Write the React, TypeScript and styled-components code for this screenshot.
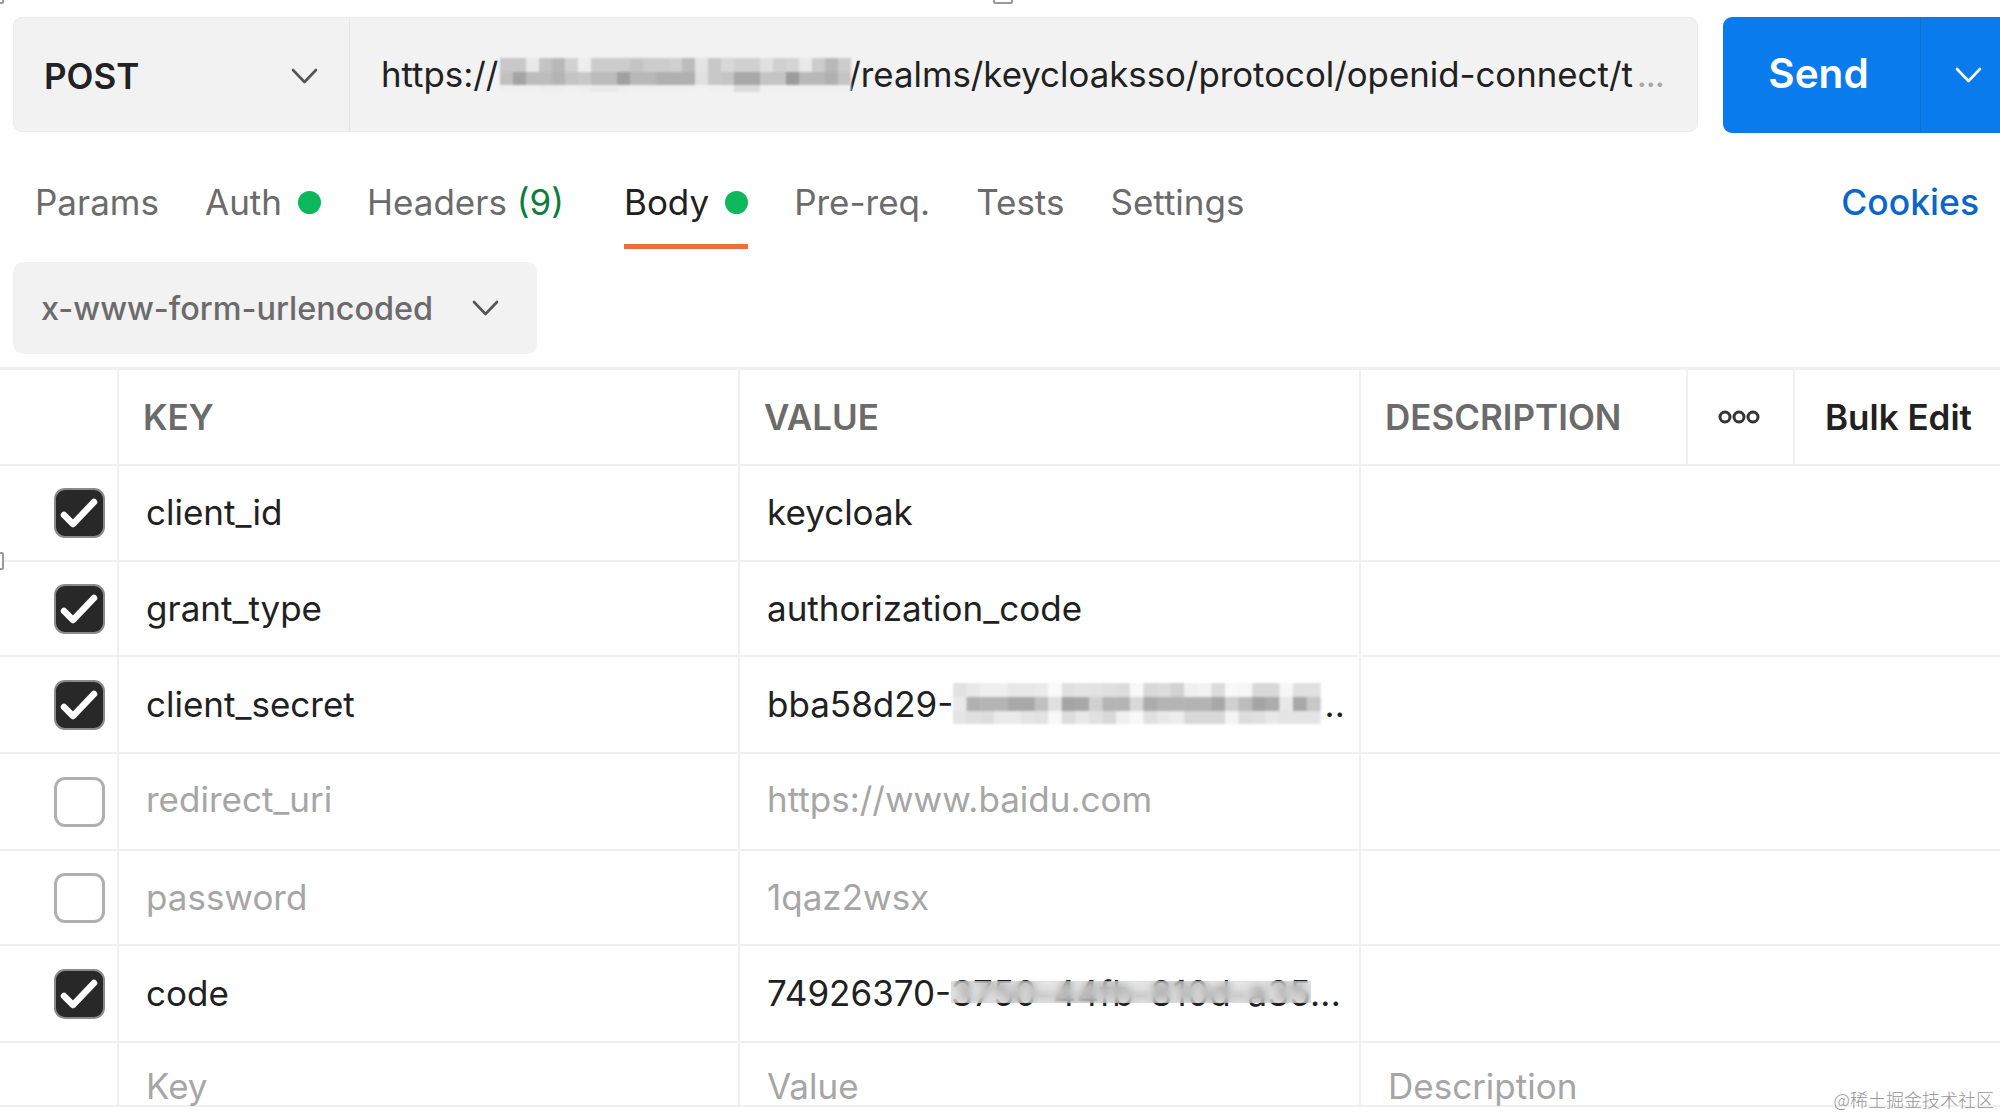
import React from "react";
import styled, { createGlobalStyle } from "styled-components";

const Global = createGlobalStyle`
  html, body { margin: 0; padding: 0; background: #fff; }
  * { box-sizing: border-box; }
`;

const Page = styled.div`
  position: relative;
  width: 2000px;
  height: 1119px;
  overflow: hidden;
  background: #fff;
  font-family: Inter, "Liberation Sans", sans-serif;
  font-size: 35px;
  color: #212121;
`;

const Handle = styled.div<{ $x: number; $y: number; $w: number; $h: number }>`
  position: absolute;
  left: ${(p) => p.$x}px;
  top: ${(p) => p.$y}px;
  width: ${(p) => p.$w}px;
  height: ${(p) => p.$h}px;
  border: 2px solid #9a9a9a;
  border-radius: 2px;
  background: #fff;
`;

const Toolbar = styled.div`
  display: flex;
  gap: 25px;
  padding: 17px 0 0 13px;
  height: 133px;
`;

const UrlGroup = styled.div`
  display: flex;
  flex: none;
  width: 1685px;
  height: 115px;
  background: #f2f2f2;
  border: 1px solid #ebebeb;
  border-radius: 9px;
`;

const Method = styled.div`
  display: flex;
  flex: none;
  align-items: center;
  justify-content: space-between;
  width: 336px;
  padding: 2px 31px 0 30px;
  border-right: 1px solid #e6e6e6;
  font-weight: 600;
  font-size: 35px;
  color: #222;
`;

const UrlText = styled.div`
  display: flex;
  align-items: center;
  flex: 1;
  min-width: 0;
  padding: 0 0 2px 31px;
  font-size: 34.8px;
  color: #212121;
  white-space: nowrap;
`;

const UrlMask = styled.div`
  margin: 2px -3px 0 2px;
`;

const Faint = styled.span`
  margin-left: 4px;
  letter-spacing: -1px;
  color: #a8a8a8;
`;

const SendGroup = styled.div`
  display: flex;
  flex: 1;
  height: 116px;
  background: #097bed;
  border-radius: 9px 0 0 9px;
  color: #fff;
`;

const SendLabel = styled.div`
  display: flex;
  align-items: center;
  justify-content: center;
  width: 198px;
  padding: 0 6px 3px 0;
  font-size: 40.5px;
  font-weight: 600;
  border-right: 1px solid #0a6fd6;
`;

const SendCaret = styled.div`
  display: flex;
  align-items: center;
  justify-content: center;
  flex: 1;
  padding-left: 16px;
`;

const TabBar = styled.div`
  display: flex;
  align-items: flex-start;
  gap: 46px;
  height: 116px;
  padding: 0 21px 0 35px;
`;

const Tab = styled.div<{ $active?: boolean; $after?: number }>`
  display: flex;
  align-items: flex-start;
  gap: 16px;
  height: 116px;
  padding-top: 47px;
  line-height: 44px;
  margin-right: ${(p) => p.$after ?? 0}px;
  color: ${(p) => (p.$active ? "#212121" : "#6b6b6b")};
  border-bottom: 5px solid ${(p) => (p.$active ? "#f26b3a" : "transparent")};
`;

const Dot = styled.span`
  width: 23px;
  height: 23px;
  margin-top: 11px;
  border-radius: 50%;
  background: #0cb85b;
`;

const Count = styled.span`
  color: #0a7d3c;
`;

const Cookies = styled.div`
  margin-left: auto;
  padding-top: 48px;
  line-height: 44px;
  font-size: 35.5px;
  font-weight: 500;
  color: #0a66c9;
`;

const BodySelect = styled.div`
  display: flex;
  align-items: center;
  justify-content: space-between;
  width: 524px;
  height: 92px;
  margin: 13px 0 13px 13px;
  padding: 0 38px 0 28px;
  background: #f2f2f2;
  border-radius: 10px;
  font-size: 32.4px;
  font-weight: 500;
  color: #6b6b6b;
`;

const Table = styled.div`
  border-top: 3px solid #f0f0f0;
`;

const Row = styled.div<{ $h: number }>`
  display: grid;
  grid-template-columns: 117px 621px 621px 1fr;
  height: ${(p) => p.$h}px;
  border-bottom: 2px solid #f0f0f0;
`;

const HeadRow = styled(Row)`
  grid-template-columns: 117px 621px 621px 327px 107px 1fr;
  font-weight: 600;
  font-size: 35px;
  color: #6b6b6b;
`;

const Cell = styled.div<{ $muted?: boolean; $lift?: number }>`
  display: flex;
  align-items: center;
  padding: 0 14px ${(p) => p.$lift ?? 0}px 27px;
  border-left: 2px solid #f0f0f0;
  color: ${(p) => (p.$muted ? "#a6a6a6" : "#212121")};
  white-space: nowrap;
`;

const InputCell = styled.div`
  padding: 23px 14px 0 27px;
  line-height: 40px;
  border-left: 2px solid #f0f0f0;
  color: #a6a6a6;
  white-space: nowrap;
`;

const HeadCell = styled.div<{ $first?: boolean; $dark?: boolean; $center?: boolean; $pad?: number }>`
  display: flex;
  align-items: center;
  justify-content: ${(p) => (p.$center ? "center" : "flex-start")};
  padding: ${(p) => (p.$center ? "0 4px 0 0" : `0 0 0 ${p.$pad ?? 24}px`)};
  border-left: ${(p) => (p.$first ? "none" : "2px solid #f0f0f0")};
  color: ${(p) => (p.$dark ? "#212121" : "#6b6b6b")};
`;

const CheckCell = styled.div`
  display: flex;
  align-items: center;
  padding-left: 54px;
`;

const Check = styled.div<{ $on: boolean }>`
  display: flex;
  width: 51px;
  height: 50px;
  border-radius: 11px;
  background: ${(p) => (p.$on ? "#282828" : "#fff")};
  border: ${(p) => (p.$on ? "2px solid #8a8a8a" : "3px solid #b0b0b0")};
`;

const MosaicSvg = styled.svg`
  display: block;
  flex: none;
  filter: blur(0.9px);
`;

const Trail = styled.span`
  margin-left: 4px;
`;

const Obscured = styled.span`
  position: relative;
  display: inline-block;
  letter-spacing: 0.3px;
`;

const Smear = styled.span`
  position: absolute;
  left: 0;
  right: 30px;
  top: 9px;
  height: 22px;
  backdrop-filter: blur(4px);
  background: rgba(205, 205, 205, 0.55);
`;

const Watermark = styled.div`
  position: absolute;
  right: 6px;
  bottom: 9px;
  font-family: "Noto Sans CJK SC", sans-serif;
  font-size: 18px;
  font-weight: 300;
  line-height: 22px;
  color: #959595;
`;

const Chevron = ({ color }: { color: string }) => (
  <svg width="27" height="16" viewBox="0 0 27 16" fill="none">
    <path d="M2 2 L13.5 14 L25 2" stroke={color} strokeWidth="2.6" strokeLinecap="round" strokeLinejoin="round" />
  </svg>
);

const hex = (v: string) => `#${v}${v}${v}`;

const Mosaic = ({ rows, cell, heights }: { rows: string[]; cell: number; heights: number[] }) => {
  const cols = rows[0].split(",");
  const h = heights.reduce((a, b) => a + b, 0);
  let y = 0;
  return (
    <MosaicSvg width={cols.length * cell} height={h} viewBox={`0 0 ${cols.length * cell} ${h}`}>
      {rows.map((r, ri) => {
        const top = y;
        y += heights[ri];
        return r.split(",").map((c, ci) => (
          <rect key={`${ri}-${ci}`} x={ci * cell} y={top} width={cell + 0.5} height={heights[ri] + 0.5} fill={hex(c)} />
        ));
      })}
    </MosaicSvg>
  );
};

const urlMosaic = [
  "c8,c8,e8,c4,b8,d2,ee,cc,cc,cc,c4,cc,cc,d0,bc,e4,c8,d8,d0,d0,e0,d0,d4,e8,cc,b8,cc",
  "c0,a4,bc,bc,b4,c4,c8,bc,bc,a0,b8,b8,b0,b0,b0,e0,c8,c4,a8,a8,c4,c4,9c,b8,b8,b0,c4",
  "f0,f0,f0,ee,ee,f0,ee,ea,ea,ee,f0,f0,f0,f0,f0,f2,f0,f0,dc,dc,f0,f0,f0,f0,f0,f0,f0",
];

const secretMosaic = [
  "e2,e8,ee,ee,e8,e8,ea,fa,e0,e4,e2,e0,dc,f8,d8,dc,d2,f0,f2,dc,f8,f6,d8,d8,f6,e0,e0",
  "e8,b0,b4,b4,a8,a8,c0,e0,a4,a8,d0,b4,b4,d8,ac,b4,b4,b4,b4,a8,d0,bc,a4,ac,e8,a8,c8",
  "e4,e0,dc,ea,ea,e4,e2,f8,dc,e8,e0,d8,f0,f8,e0,e8,ec,d8,d8,d8,f4,dc,e0,e8,e4,e4,e4",
];

const Tick = () => (
  <svg width="47" height="46" viewBox="0 0 47 46" fill="none">
    <path d="M8 25 L17 34 L38 12" stroke="#fff" strokeWidth="6.5" strokeLinecap="round" strokeLinejoin="round" />
  </svg>
);

const rows = [
  { on: true, k: "client_id", v: "keycloak", h: 96, lift: 2 },
  { on: true, k: "grant_type", v: "authorization_code", h: 95, lift: 2 },
  { on: true, k: "client_secret", v: "secret", h: 97, lift: 2 },
  { on: false, k: "redirect_uri", v: "https://www.baidu.com", h: 97, lift: 5 },
  { on: false, k: "password", v: "1qaz2wsx", h: 95, lift: 2 },
  { on: true, k: "code", v: "code", h: 97, lift: 2 },
];

const renderValue = (v: string) => {
  if (v === "secret")
    return (
      <>
        bba58d29-
        <Mosaic rows={secretMosaic} cell={13.6} heights={[14, 14, 13]} />
        <Trail>..</Trail>
      </>
    );
  if (v === "code")
    return (
      <>
        74926370-
        <Obscured>
          3750-44fb-810d-a35...
          <Smear />
        </Obscured>
      </>
    );
  return v;
};

export default function App() {
  return (
    <Page>
      <Global />
      <Handle $x={-10} $y={-10} $w={14} $h={14} />
      <Handle $x={993} $y={-10} $w={20} $h={14} />
      <Handle $x={-10} $y={552} $w={14} $h={18} />
      <Toolbar>
        <UrlGroup>
          <Method>
            POST
            <Chevron color="#555" />
          </Method>
          <UrlText>
            https://
            <UrlMask>
              <Mosaic rows={urlMosaic} cell={13} heights={[14, 13, 7]} />
            </UrlMask>
            /realms/keycloaksso/protocol/openid-connect/t
            <Faint>...</Faint>
          </UrlText>
        </UrlGroup>
        <SendGroup>
          <SendLabel>Send</SendLabel>
          <SendCaret>
            <Chevron color="#fff" />
          </SendCaret>
        </SendGroup>
      </Toolbar>
      <TabBar>
        <Tab>Params</Tab>
        <Tab>
          Auth
          <Dot />
        </Tab>
        <Tab $after={14}>
          <span>
            Headers <Count>(9)</Count>
          </span>
        </Tab>
        <Tab $active>
          Body
          <Dot />
        </Tab>
        <Tab>Pre-req.</Tab>
        <Tab>Tests</Tab>
        <Tab>Settings</Tab>
        <Cookies>Cookies</Cookies>
      </TabBar>
      <BodySelect>
        x-www-form-urlencoded
        <Chevron color="#555" />
      </BodySelect>
      <Table>
        <HeadRow $h={96}>
          <HeadCell $first />
          <HeadCell>KEY</HeadCell>
          <HeadCell>VALUE</HeadCell>
          <HeadCell>DESCRIPTION</HeadCell>
          <HeadCell $center>
            <svg width="42" height="16" viewBox="0 0 42 16" fill="none" stroke="#333" strokeWidth="3">
              <circle cx="7" cy="8" r="5" />
              <circle cx="21" cy="8" r="5" />
              <circle cx="35" cy="8" r="5" />
            </svg>
          </HeadCell>
          <HeadCell $dark $pad={30}>Bulk Edit</HeadCell>
        </HeadRow>
        {rows.map((r) => (
          <Row key={r.k} $h={r.h}>
            <CheckCell>
              <Check $on={r.on}>{r.on && <Tick />}</Check>
            </CheckCell>
            <Cell $muted={!r.on} $lift={r.lift}>{r.k}</Cell>
            <Cell $muted={!r.on} $lift={r.lift}>{renderValue(r.v)}</Cell>
            <Cell />
          </Row>
        ))}
        <Row $h={64}>
          <CheckCell />
          <InputCell>Key</InputCell>
          <InputCell>Value</InputCell>
          <InputCell>Description</InputCell>
        </Row>
      </Table>
      <Watermark>@稀土掘金技术社区</Watermark>
    </Page>
  );
}
